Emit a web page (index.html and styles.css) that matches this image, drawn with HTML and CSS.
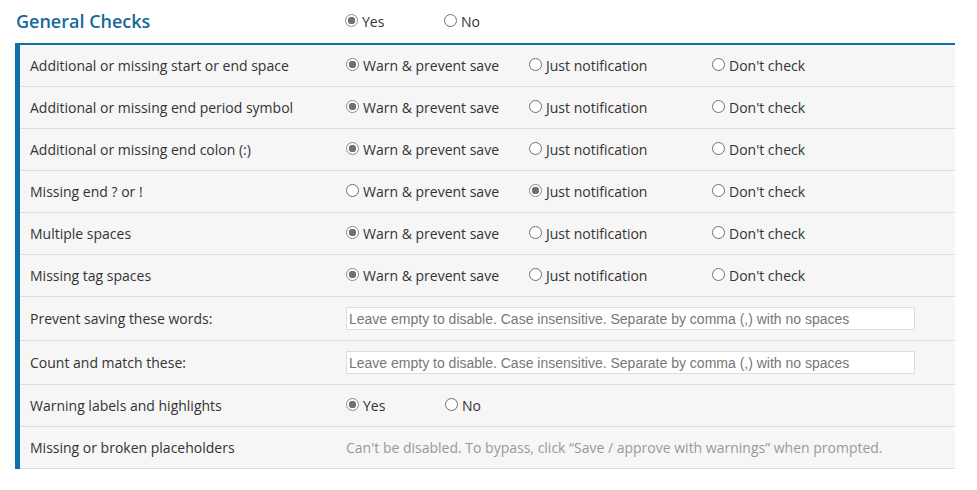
FILE: index.html
```html
<!DOCTYPE html>
<html lang="en">
<head>
    <meta charset="UTF-8">
    <title>General Checks</title>
    <link rel="stylesheet" href="styles.css">
</head>
<body>
    <div class="section-head">
        <h2>General Checks</h2>
        <label class="opt short"><input type="radio" name="general" checked> Yes</label>
        <label class="opt short"><input type="radio" name="general"> No</label>
    </div>

    <div class="checks">
        <div class="row">
            <div class="name">Additional or missing start or end space</div>
            <label class="opt"><input type="radio" name="r1" checked> Warn &amp; prevent save</label>
            <label class="opt"><input type="radio" name="r1"> Just notification</label>
            <label class="opt"><input type="radio" name="r1"> Don't check</label>
        </div>
        <div class="row">
            <div class="name">Additional or missing end period symbol</div>
            <label class="opt"><input type="radio" name="r2" checked> Warn &amp; prevent save</label>
            <label class="opt"><input type="radio" name="r2"> Just notification</label>
            <label class="opt"><input type="radio" name="r2"> Don't check</label>
        </div>
        <div class="row">
            <div class="name">Additional or missing end colon (:)</div>
            <label class="opt"><input type="radio" name="r3" checked> Warn &amp; prevent save</label>
            <label class="opt"><input type="radio" name="r3"> Just notification</label>
            <label class="opt"><input type="radio" name="r3"> Don't check</label>
        </div>
        <div class="row">
            <div class="name">Missing end ? or !</div>
            <label class="opt"><input type="radio" name="r4"> Warn &amp; prevent save</label>
            <label class="opt"><input type="radio" name="r4" checked> Just notification</label>
            <label class="opt"><input type="radio" name="r4"> Don't check</label>
        </div>
        <div class="row">
            <div class="name">Multiple spaces</div>
            <label class="opt"><input type="radio" name="r5" checked> Warn &amp; prevent save</label>
            <label class="opt"><input type="radio" name="r5"> Just notification</label>
            <label class="opt"><input type="radio" name="r5"> Don't check</label>
        </div>
        <div class="row">
            <div class="name">Missing tag spaces</div>
            <label class="opt"><input type="radio" name="r6" checked> Warn &amp; prevent save</label>
            <label class="opt"><input type="radio" name="r6"> Just notification</label>
            <label class="opt"><input type="radio" name="r6"> Don't check</label>
        </div>
        <div class="row row-input">
            <div class="name">Prevent saving these words:</div>
            <input class="words" type="text" placeholder="Leave empty to disable. Case insensitive. Separate by comma (,) with no spaces">
        </div>
        <div class="row row-input">
            <div class="name">Count and match these:</div>
            <input class="words" type="text" placeholder="Leave empty to disable. Case insensitive. Separate by comma (,) with no spaces">
        </div>
        <div class="row">
            <div class="name">Warning labels and highlights</div>
            <label class="opt short"><input type="radio" name="r7" checked> Yes</label>
            <label class="opt short"><input type="radio" name="r7"> No</label>
        </div>
        <div class="row">
            <div class="name">Missing or broken placeholders</div>
            <div class="note">Can't be disabled. To bypass, click &ldquo;Save / approve with warnings&rdquo; when prompted.</div>
        </div>
    </div>
</body>
</html>
```

FILE: styles.css
```css
body {
    margin: 0;
    font-family: "Open Sans", sans-serif;
    font-size: 14px;
    color: #333;
    background: #fff;
}
.section-head {
    display: flex;
    align-items: center;
    height: 43px;
    padding-left: 16px;
}
.section-head h2 {
    width: 329px;
    margin: 0;
    font-size: 18px;
    font-weight: 600;
    color: #16699a;
    position: relative;
    top: -1px;
}
.checks {
    width: 935px;
    margin-left: 15px;
    border-top: 2px solid #0b71a6;
    border-left: 5px solid #0b71a6;
    background: #f6f6f6;
}
.row {
    display: flex;
    align-items: center;
    height: 41px;
    padding-left: 10px;
    border-bottom: 1px solid #dcdcdc;
}
.row-input {
    height: 43px;
}
.name {
    width: 316px;
    flex-shrink: 0;
}
.opt {
    display: flex;
    align-items: center;
    width: 183px;
    cursor: pointer;
}
.opt.short {
    width: 99px;
}
.opt input {
    appearance: none;
    -webkit-appearance: none;
    width: 13px;
    height: 13px;
    margin: 0 4px 2px 0;
    border: 1px solid #6f6f6f;
    border-radius: 50%;
    background: #fff;
    box-sizing: border-box;
    flex-shrink: 0;
}
.opt input:checked {
    border-color: #888;
    background: radial-gradient(circle, #707070 0 3.5px, #fff 4px);
}
.words {
    width: 569px;
    height: 23px;
    margin: 0;
    padding: 0 2px;
    border: 1px solid #ddd;
    box-sizing: border-box;
    font-family: "Liberation Sans", Arial, sans-serif;
    font-size: 14px;
    background: #fff;
}
.words::placeholder {
    color: #777;
}
.note {
    color: #999;
}
```
